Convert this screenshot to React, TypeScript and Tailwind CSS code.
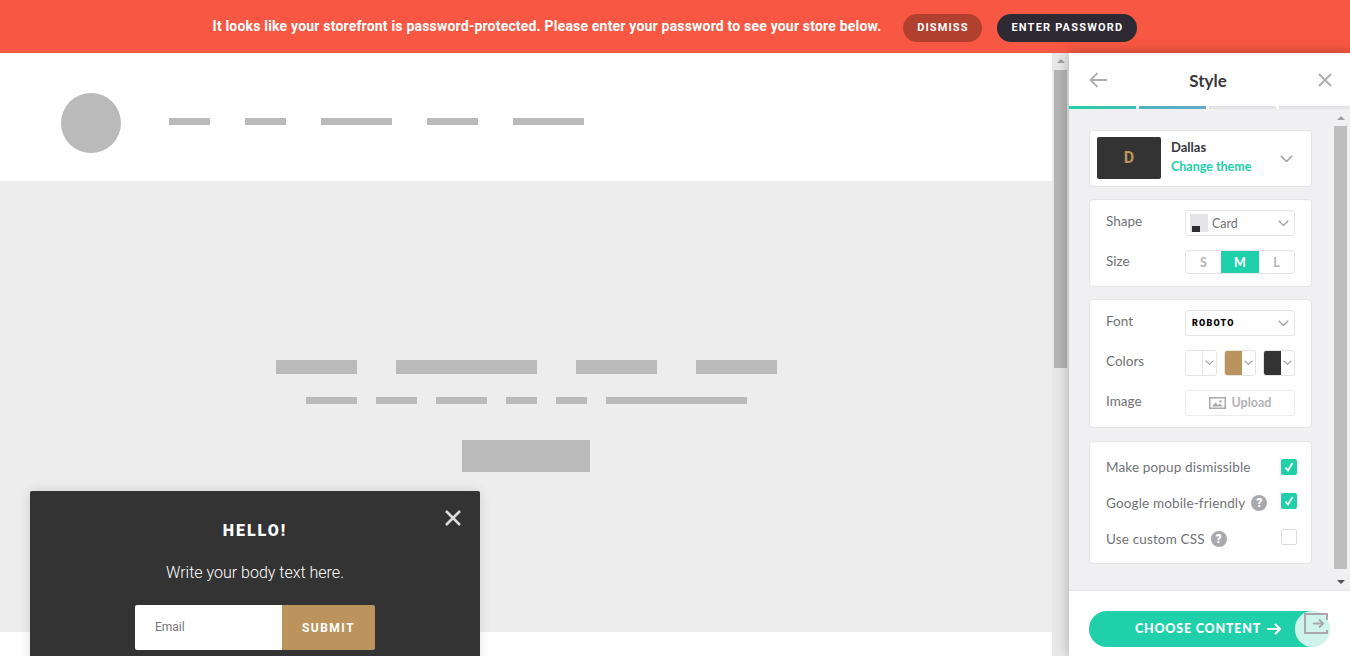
import { useState } from "react"

const PANEL_FONT = "font-['Lato','Noto_Sans',sans-serif]"

function Bar({ className }: { className: string }) {
  return <div className={`bg-[#bababa] ${className}`} />
}

function Chevron({ className = "" }: { className?: string }) {
  return (
    <svg viewBox="0 0 14 8" className={className} fill="none" stroke="#a5a5a8" strokeWidth="1.8">
      <path d="M1 1l6 6 6-6" />
    </svg>
  )
}

function Check({ checked, className = "-mt-[2px]" }: { checked: boolean; className?: string }) {
  if (!checked) {
    return <div className={`h-4 w-4 rounded-[2px] border border-[#dcdcde] bg-white ${className}`} />
  }
  return (
    <div className={`flex h-4 w-4 items-center justify-center rounded-[2px] bg-[#20d0aa] ${className}`}>
      <svg viewBox="0 0 12 12" className="h-3 w-3" fill="none" stroke="#fff" strokeWidth="1.8">
        <path d="M2.500 6.500l2.500 3 4.500-7.500" />
      </svg>
    </div>
  )
}

function Help() {
  return (
    <span className="flex h-4 w-4 items-center justify-center rounded-full bg-[#a9a8ac] font-['Roboto',sans-serif] text-[12px] font-black text-white">
      ?
    </span>
  )
}

function Swatch({ color, border }: { color: string; border?: boolean }) {
  return (
    <div className="flex h-[26px] w-8 overflow-hidden rounded-[3px] border border-[#e4e4e6] bg-white">
      <div className={`h-full w-[17px] ${border ? "border-r border-[#e4e4e6]" : ""}`} style={{ background: color }} />
      <div className="flex flex-1 items-center justify-center">
        <Chevron className="w-[9px]" />
      </div>
    </div>
  )
}

function Row({ label, children }: { label: string; children: React.ReactNode }) {
  return (
    <div className="flex items-start">
      <div className="w-[79px] pt-[3px] text-[13.500px] leading-[16px] text-[#727276]">{label}</div>
      {children}
    </div>
  )
}

function Popup() {
  const [email, setEmail] = useState("")
  return (
    <div className="absolute left-[30px] top-[438px] h-[300px] w-[450px] rounded-[2px] bg-[#333333] font-['Roboto',sans-serif] shadow-[0_0_12px_rgba(0,0,0,0.12)]">
      <button className="absolute right-[19px] top-[19px]">
        <svg viewBox="0 0 16 16" className="h-4 w-4" stroke="#dcdcdc" strokeWidth="2.500" fill="none">
          <path d="M1 1l14 14M15 1L1 15" />
        </svg>
      </button>
      <div className="pt-[30px] text-center text-[16px] leading-[20px] font-black tracking-[2px] text-white">HELLO!</div>
      <div className="mt-[22px] text-center text-[16px] leading-[20px] font-light text-white">Write your body text here.</div>
      <div className="mt-[22px] flex justify-center">
        <input
          value={email}
          onChange={(e) => setEmail(e.target.value)}
          placeholder="Email"
          className="h-[45px] w-[147px] rounded-l-[2px] bg-white pb-[1px] pl-5 text-[12px] text-[#555] outline-none placeholder:text-[#777]"
        />
        <button className="h-[45px] w-[93px] rounded-r-[2px] bg-[#bb945d] text-[12px] font-bold tracking-[1.500px] text-white">
          SUBMIT
        </button>
      </div>
    </div>
  )
}

function Panel() {
  return (
    <div className={`relative z-20 flex w-[281px] shrink-0 flex-col bg-white shadow-[0_0_12px_rgba(0,0,0,0.28)] ${PANEL_FONT}`}>
      <div className="flex h-[53px] items-center justify-between pl-5 pr-[18px]">
        <svg viewBox="0 0 18 16" className="h-4 w-[18px]" fill="none" stroke="#aeaeb2" strokeWidth="1.800">
          <path d="M18 8H1.500M8.500 1l-7 7 7 7" />
        </svg>
        <div className="mr-[9px] pt-[2px] text-[17px] font-bold text-[#38383c]">Style</div>
        <svg viewBox="0 0 14 14" className="h-[14px] w-[14px]" fill="none" stroke="#aeaeb2" strokeWidth="1.800">
          <path d="M1 1l12 12M13 1L1 13" />
        </svg>
      </div>
      <div className="flex h-[3px] gap-[3px]">
        <div className="w-[67px] bg-gradient-to-r from-[#20d0aa] to-[#41bcb9]" />
        <div className="w-[67px] bg-gradient-to-r from-[#4ab5bc] to-[#63a9cb]" />
        <div className="w-[67px] bg-[#e4e4e7]" />
        <div className="w-[71px] bg-[#e4e4e7]" />
      </div>
      <div className="flex h-[481px] bg-[#f0f0f2]">
        <div className="flex w-[243px] shrink-0 flex-col gap-3 pl-5 pt-[21px]">
          <div className="flex h-[57px] w-[223px] items-center rounded-[4px] border border-[#e4e4e6] bg-white pl-[7px]">
            <div className="mb-[1px] flex h-[42px] w-16 items-center justify-center rounded-[2px] bg-[#333333] font-['Roboto',sans-serif] text-[16px] font-bold text-[#bb945d]">
              D
            </div>
            <div className="ml-[10px] flex-1 pb-[3px]">
              <div className="text-[13px] leading-[19px] font-bold text-[#38383c]">Dallas</div>
              <div className="text-[12.500px] leading-[19px] font-bold text-[#20d0aa]">Change theme</div>
            </div>
            <Chevron className="mr-[18px] w-[13px]" />
          </div>
          <div className="flex h-[88px] w-[223px] flex-col gap-[14px] rounded-[4px] border border-[#e4e4e6] bg-white pl-4 pt-[10px]">
            <Row label="Shape">
              <div className="flex h-[26px] w-[110px] items-center rounded-[3px] border border-[#e4e4e6] pl-1">
                <div className="relative h-[18px] w-[18px] bg-[#e4e3e7]">
                  <div className="absolute bottom-0 left-[2px] h-[6px] w-2 bg-[#2b2b30]" />
                </div>
                <span className="ml-1 flex-1 pt-[2px] text-[12.500px] text-[#727276]">Card</span>
                <Chevron className="mr-[5px] w-[11px]" />
              </div>
            </Row>
            <Row label="Size">
              <div className="flex h-6 w-[110px] overflow-hidden rounded-[3px] border border-[#e4e4e6] text-center text-[12.500px] leading-[24px] font-bold text-[#b3b3b6]">
                <div className="w-[35px]">S</div>
                <div className="w-[38px] bg-[#20d0aa] text-white">M</div>
                <div className="flex-1">L</div>
              </div>
            </Row>
          </div>
          <div className="flex h-[129px] w-[223px] flex-col gap-[14px] rounded-[4px] border border-[#e4e4e6] bg-white pl-4 pt-[10px]">
            <Row label="Font">
              <div className="flex h-[26px] w-[110px] items-center rounded-[3px] border border-[#e4e4e6] pl-[6px]">
                <span className="flex-1 pt-[2px] font-['Roboto',sans-serif] text-[9px] font-black tracking-[1.200px] text-black">ROBOTO</span>
                <Chevron className="mr-[5px] w-[11px]" />
              </div>
            </Row>
            <Row label="Colors">
              <div className="flex w-[110px] justify-between">
                <Swatch color="#ffffff" border />
                <Swatch color="#bb945d" />
                <Swatch color="#333333" />
              </div>
            </Row>
            <Row label="Image">
              <div className="flex h-[26px] w-[110px] items-center justify-center gap-[6px] rounded-[3px] border border-[#ececee] text-[12.500px] font-bold text-[#b3b3b6]">
                <svg viewBox="0 0 17 12" className="h-3 w-[17px]">
                  <path fill="#a9a8ac" fillRule="evenodd" d="M0 0h17v12H0zM1.500 1.500v9h14v-9zM3 9.500l3.500-4 2.500 2.500 2-1.500 2.500 3zM11.500 3.200a1.200 1.200 0 1 0 .01 0z" />
                </svg>
                <span className="pt-[1px]">Upload</span>
              </div>
            </Row>
          </div>
          <div className="mt-[1px] flex h-[123px] w-[223px] flex-col gap-5 rounded-[4px] border border-[#e4e4e6] bg-white pl-4 pr-[14px] pt-[17px] text-[13.500px] leading-[16px] tracking-[0.150px] text-[#727276]">
            <div className="flex items-start justify-between">
              <span>Make popup dismissible</span>
              <Check checked className="mt-0" />
            </div>
            <div className="flex items-start justify-between">
              <span className="flex items-center gap-[6px]">Google mobile-friendly <Help /></span>
              <Check checked />
            </div>
            <div className="flex items-start justify-between">
              <span className="flex items-center gap-[6px]">Use custom CSS <Help /></span>
              <Check checked={false} />
            </div>
          </div>
        </div>
        <div className="ml-[22px] flex h-full w-[13px] flex-col items-center pt-[7px]">
          <div className="h-0 w-0 border-x-[4px] border-b-[4px] border-x-transparent border-b-[#a0a0a0]" />
          <div className="mb-[11px] mt-[6px] h-[443px] w-[13px] bg-[#bebebe]" />
          <div className="h-0 w-0 border-x-[4px] border-t-[4px] border-x-transparent border-t-[#505050]" />
        </div>
      </div>
      <div className="relative flex flex-1 border-t border-[#e4e4e6] pl-5 pt-5">
        <button className="flex h-9 w-[238px] items-center justify-center gap-[6px] rounded-full bg-[#20d0aa] text-[12.500px] font-black tracking-[0.800px] text-white">
          CHOOSE CONTENT
          <svg viewBox="0 0 14 12" className="h-3 w-[14px]" fill="none" stroke="#fff" strokeWidth="2">
            <path d="M0 6h13M8 1l5 5-5 5" />
          </svg>
        </button>
        <div className="absolute left-[226px] top-5 h-9 w-[35px] rounded-full bg-[#cff4ec]">
          <svg viewBox="0 0 24 21" className="absolute left-[9px] top-[2px] h-[21px] w-6" fill="none" stroke="#a9a8ac" strokeWidth="2">
            <path d="M23 7V1H1v19h22v-3M9 10.500h10M15 6.500l4 4-4 4" />
          </svg>
        </div>
      </div>
    </div>
  )
}

export default function App() {
  return (
    <div className="flex h-screen w-full flex-col overflow-hidden bg-white">
      <div className="flex h-[53px] shrink-0 items-center justify-center bg-[#f85843] pt-[3px] font-['Roboto',sans-serif]">
        <div className="mr-[22px] pb-[4px] text-[14px] font-bold tracking-[0.190px] text-white">
          It looks like your storefront is password-protected. Please enter your password to see your store below.
        </div>
        <button className="mr-[15px] h-7 w-[79px] rounded-full bg-[#b2402f] text-[11px] font-bold tracking-[1.100px] text-white">DISMISS</button>
        <button className="h-7 w-[140px] rounded-full bg-[#2d2a33] text-[11px] font-bold tracking-[1.200px] text-white">ENTER PASSWORD</button>
      </div>
      <div className="flex min-h-0 flex-1">
        <div className="relative w-[1052px] shrink-0 overflow-hidden">
          <div className="flex h-[128px] items-start gap-12 pl-[61px] pt-10">
            <div className="h-[60px] w-[60px] rounded-full bg-[#bababa]" />
            <div className="mt-[25px] flex gap-[35px]">
              <Bar className="h-[7px] w-[41px]" />
              <Bar className="h-[7px] w-[41px]" />
              <Bar className="h-[7px] w-[71px]" />
              <Bar className="h-[7px] w-[51px]" />
              <Bar className="h-[7px] w-[71px]" />
            </div>
          </div>
          <div className="flex h-[451px] flex-col items-center bg-[#ededed] pt-[179px]">
            <div className="flex gap-[39px]">
              <Bar className="h-[14px] w-[81px]" />
              <Bar className="h-[14px] w-[141px]" />
              <Bar className="h-[14px] w-[81px]" />
              <Bar className="h-[14px] w-[81px]" />
            </div>
            <div className="mt-[23px] flex gap-[19px]">
              <Bar className="h-[7px] w-[51px]" />
              <Bar className="h-[7px] w-[41px]" />
              <Bar className="h-[7px] w-[51px]" />
              <Bar className="h-[7px] w-[31px]" />
              <Bar className="h-[7px] w-[31px]" />
              <Bar className="h-[7px] w-[141px]" />
            </div>
            <Bar className="mt-9 h-8 w-32" />
          </div>
          <Popup />
        </div>
        <div className="flex w-[17px] shrink-0 flex-col items-center bg-[#e8e8e8] pt-[6px]">
          <div className="h-0 w-0 border-x-[4px] border-b-[4px] border-x-transparent border-b-[#a0a0a0]" />
          <div className="mt-[7px] h-[298px] w-[13px] bg-[#b4b4b4]" />
        </div>
        <Panel />
      </div>
    </div>
  )
}
